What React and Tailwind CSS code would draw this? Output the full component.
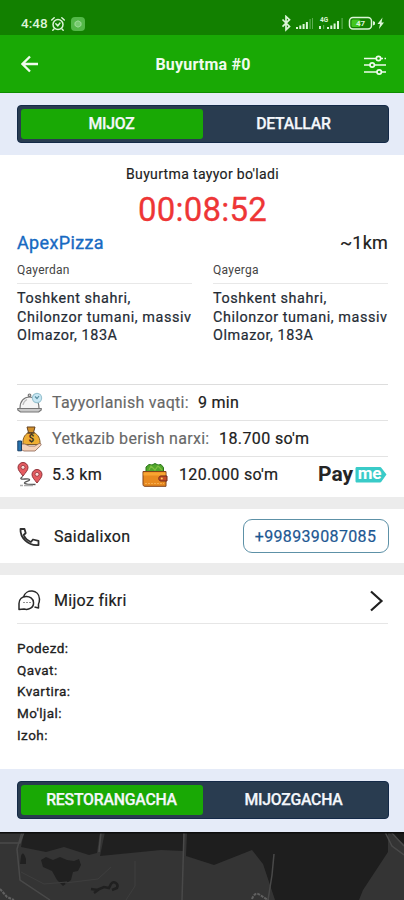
import React from "react";

function StatusBar() {
  return (
    <div className="flex h-[35px] items-start justify-between bg-[#128000] px-[21px] pt-[15px] text-[#dcf5d8]">
      <div className="flex h-[17px] items-center">
        <span className="w-[28px] whitespace-nowrap text-[13.5px] font-medium leading-[17px]">4:48</span>
        <svg className="ml-[1px]" width="16" height="16" viewBox="0 0 16 16" fill="none" stroke="currentColor" strokeWidth="1.5" strokeLinecap="round">
          <circle cx="8" cy="8.5" r="5" />
          <path d="M1.7 4 4.2 1.8M14.3 4 11.8 1.8M4 13l-1.2 1.2M12 13l1.2 1.2M5.8 7.8 7.8 9.8 10 7" />
        </svg>
        <svg className="ml-[5px]" width="14" height="14" viewBox="0 0 14 14">
          <rect width="14" height="14" rx="4" fill="#53b848" />
          <path d="M4 5.5 7 3.8l3 1.7v3L7 10.2 4 8.5z" fill="#77ca70" stroke="#9ddc98" />
        </svg>
      </div>
      <svg className="-mr-[3px]" width="105" height="17" viewBox="281 15 105 17">
        <path d="m282.500 19.500 7 7-3.500 3.200v-13.200l3.500 3.200-7 7" fill="none" stroke="currentColor" strokeWidth="1.700" />
        <path d="M296 29v-2h2v2zM299.300 29v-3.500h2V29zM302.600 29v-5h2v5zM305.900 29v-7h2v7z" fill="currentColor" />
        <path d="M309.500 19h1.200v10h-1.200zM312 18h1v11h-1z" fill="#5bae50" />
        <path d="M319 29v-3h2v3zM327 29v-2h2v2zM330.300 29v-3.500h2V29zM333.600 29v-5.500h2V29zM337 29v-8h2v8z" fill="currentColor" />
        <path d="M341.500 18h1.200v11h-1.200zM323 25h1.200v4H323z" fill="#5bae50" />
        <text x="320" y="21.800" fontSize="6.500" fontWeight="700" fill="currentColor">4G</text>
        <rect x="349.500" y="17.500" width="22" height="11.500" rx="3.500" fill="none" stroke="currentColor" strokeWidth="1.500" />
        <rect x="351.500" y="19.500" width="9" height="7.500" rx="1.500" fill="#43c51f" />
        <path d="M373 21v4.500l2-1v-2.500z" fill="currentColor" />
        <text x="360.500" y="26.300" textAnchor="middle" fontSize="8" fontWeight="700" fill="currentColor">47</text>
        <path d="m382.500 17.500-5 6.500h2.500l-1 5 5-6.500h-2.500z" fill="currentColor" />
      </svg>
    </div>
  );
}

function Header() {
  return (
    <div className="flex h-[58px] items-center justify-between border-b border-[#0d8d00] bg-[#19a905] pl-[21px] pr-[17px] text-[#effbed]">
      <svg width="22" height="18" viewBox="0 0 22 18" fill="none" stroke="currentColor" strokeWidth="2.300">
        <path d="M17 9H2M9 1.500 1.500 9 9 16.500" />
      </svg>
      <div className="pt-[2px] text-[16px] font-bold tracking-[0.2px]">Buyurtma #0</div>
      <svg className="mt-[2px]" width="24" height="22" viewBox="0 0 24 22" fill="none" stroke="currentColor" strokeWidth="1.700">
        <path d="M1 4.500h12M18 4.500h2M21.500 4.500h1.500M1 11h6M11.500 11H23M1 18h13M18.500 18H23" />
        <circle cx="15.500" cy="4.500" r="2.200" />
        <circle cx="9.200" cy="11" r="2.200" />
        <circle cx="16.200" cy="18" r="2.200" />
      </svg>
    </div>
  );
}

function Toggle({ left, right }) {
  return (
    <div className="flex h-[38px] items-stretch rounded-[4px] border border-[#142a48] bg-[#293c50] p-[3px] text-[15.800px] font-medium tracking-[-0.220px] text-[#f4f7fb] [-webkit-text-stroke:0.250px_#f4f7fb]">
      <div className="flex w-[182px] items-center justify-center rounded-[3px] bg-[#19a905] pr-[1px]">{left}</div>
      <div className="flex flex-1 items-center justify-center pr-[1px]">{right}</div>
    </div>
  );
}

function Address({ title }) {
  return (
    <div className="w-[175px]">
      <div className="border-b border-[#e8e8e8] pb-[4px] text-[12px] leading-[17px] tracking-[0.280px] text-[#444]">{title}</div>
      <div className="whitespace-nowrap pt-[6px] text-[14.400px] leading-[18.500px] tracking-[0.570px] text-[#242b34] [-webkit-text-stroke:0.200px_#242b34]">
        Toshkent shahri,<br />Chilonzor tumani, massiv<br />Olmazor, 183A
      </div>
    </div>
  );
}

function ClocheIcon() {
  return (
    <svg width="26" height="26" viewBox="0 0 26 26" fill="none" stroke="#777" strokeWidth="1.200">
      <path d="M3 18C3 11 7 7 12.500 7S22 11 22 18" fill="#f5f5f5" />
      <circle cx="12.500" cy="5.300" r="1.300" fill="#ddd" />
      <path d="M6 15c.5-3 2-4.500 4-5.500" stroke="#bbb" />
      <path d="M.8 18.500h23.400v1.500l-2.500 2H3.500L.8 20z" fill="#c9c9c9" />
      <circle cx="20" cy="8" r="4.600" fill="#c9e8f5" stroke="#9ac4d1" />
      <path d="M18 6.500 20 8.500 22 6" stroke="#588d9f" />
    </svg>
  );
}

function MoneyIcon() {
  return (
    <svg width="26" height="26" viewBox="0 0 26 26" strokeWidth="1">
      <path d="M10 1h8l-1.500 5.500h-5z" fill="#d3902a" stroke="#654321" />
      <path d="M11.500 6.500C7 9 5.500 13 6 18.500h17c.5-6-2-10-6-12z" fill="#efae34" stroke="#805a27" />
      <path d="M10.500 7h7" stroke="#59422a" strokeWidth="1.500" />
      <text x="14.500" y="16.300" textAnchor="middle" fontSize="10" fontWeight="700" fill="#3d3221">$</text>
      <path d="M4 18h4l4 2h6l4-2.500c1.500-.7 2.800.7 1.700 2L18 25H7l-3-1.500z" fill="#f5d3bc" stroke="#8a6350" strokeWidth=".8" />
      <path d="M.8 15h3.700v9.800H.8z" fill="#2673ae" stroke="#173c66" />
    </svg>
  );
}

function RouteIcon() {
  return (
    <svg width="26" height="26" viewBox="0 0 26 26" fill="none">
      <path d="M6 14.500c-4 2-2 3 2 2.500 5-.7 6 1 2.500 2.200-3 1-5 2 0 3l8 .3" stroke="#555" strokeWidth="1.300" />
      <path d="M6 14C3.500 10.500 1 8.500 1 5.500a5 5 0 0 1 10 0C11 8.500 8.500 10.500 6 14z" fill="#e45b60" stroke="#8e3037" />
      <circle cx="6" cy="5.300" r="2" fill="#f8dcd8" stroke="#8e3037" strokeWidth=".8" />
      <path d="M20 21c-2.500-3.500-5-5.500-5-8.500a5 5 0 0 1 10 0c0 3-2.500 5-5 8.500z" fill="#e45b60" stroke="#8e3037" />
      <circle cx="20" cy="12.300" r="2" fill="#f8dcd8" stroke="#8e3037" strokeWidth=".8" />
      <path d="M3 23.500h3m1 0h9" stroke="#aaa" strokeWidth="1.500" />
    </svg>
  );
}

function WalletIcon() {
  return (
    <svg width="26" height="26" viewBox="0 0 26 26">
      <path d="M4 10V5l3-2.500L10 3l3-1.500L16 3l3-.5 2.500 3V10z" fill="#51a62c" stroke="#287517" />
      <path d="m7 8 2-4 4 4 3-4 4 4" fill="none" stroke="#7fc040" strokeWidth="1.200" />
      <path d="M1 9.500h23v14.800H3c-1.500 0-2-.8-2-2z" fill="#e88a20" stroke="#80431b" />
      <path d="M1.500 10.500h22v3h-22z" fill="#f8a431" />
      <path d="M3 21.500h19" stroke="#f4ad50" strokeDasharray="2 1" />
      <path d="M25 14h-6c-3 0-3 5 0 5h6z" fill="#c44c26" stroke="#742b1b" />
      <circle cx="19.800" cy="16.500" r="1" fill="#ffd466" />
    </svg>
  );
}

function PaymeLogo() {
  return (
    <div className="flex items-center pb-[2px]">
      <span className="w-[37px] whitespace-nowrap text-[21px] font-bold leading-[25px] tracking-[0px] text-[#252525]">Pay</span>
      <svg className="mt-[1px] overflow-visible" width="33" height="26" viewBox="0 -4 33 26">
        <path d="M2 1h22.500c1 0 1.500.3 2 1l5 6.500-5 7c-.5.700-1 1-2 1H2c-1 0-1.500-.5-1.500-1.500v-12.500C.5 1.500 1 1 2 1z" fill="#39cbc8" />
        <text x="14.600" y="13.300" textAnchor="middle" fontSize="17" fontWeight="700" letterSpacing="0" fill="#fff">me</text>
      </svg>
    </div>
  );
}

function MapStrip() {
  return (
    <svg className="block" width="404" height="68" viewBox="0 832 404 68" fill="none">
      <path d="M0 832h404v68H0z" fill="#343434" />
      <path d="M24 832h76l-3 21-8 2-25-8-18 5-25-5zM105 832h78v19l-22-1-61 6z" fill="#202020" />
      <path d="M187 832h201v20l-25 38-4 10h-84l-12-36-11-14-38 15-28-9z" fill="#1e1e1e" />
      <path d="m389 832 15 12v-12z" fill="#1b1b1b" />
      <path d="M21 856q2-6 5 3v5h-6zM41 860l5-3 7 3 7-3 7 3 7 1 5-2 2 6-3 6-5 1-2 8-8 6-6-6-5-9-9-4z" fill="#202020" />
      <path d="m91 889 7 1-4 3M97 890l7-3 5 1 2-4c3-4 8 0 6 4l-5 2" stroke="#202020" strokeWidth="2.500" />
      <path d="M0 843h20l4-11M22 832l-5 17 3 31 30 20M101 832l-2 20M184 832l-2 68M385 832l7 14 12 9M391 832l13 14M274 854l-2 21-4 25" stroke="#494949" strokeWidth="1.500" />
      <path d="M21 872l23 12 23-2M65 883l33-4 13-12M135 861v25l-9 14" stroke="#3e3e3e" strokeWidth="1" />
      <path d="m0 889 7 8 7 3M252 899q3-8 8-4l8 5" stroke="#606060" strokeWidth="2" strokeDasharray="3 1" />
      <path d="M0 832.500h404" stroke="#0d0d0d" strokeWidth="2" />
    </svg>
  );
}

export default function App() {
  return (
    <div className="h-[900px] w-[404px] overflow-hidden bg-white text-[#202020]" style={{ fontFamily: "Roboto, sans-serif" }}>
      <StatusBar />
      <Header />
      <div className="h-[62px] bg-[#e5ebf8] pl-[17px] pr-[15px] pt-[12px]">
        <Toggle left="MIJOZ" right="DETALLAR" />
      </div>
      <div className="h-[342px] pl-[17px] pr-[16px]">
        <div className="pt-[10px] text-center text-[14px] leading-[18px] tracking-[0.350px] [-webkit-text-stroke:0.150px_#202020]">Buyurtma tayyor bo'ladi</div>
        <div className="mt-[8px] text-center text-[33px] leading-[38px] tracking-[0.200px] text-[#ee3636] [-webkit-text-stroke:0.300px_#ee3636]">00:08:52</div>
        <div className="mt-[2px] flex h-[22px] items-center justify-between text-[18px] tracking-[0.2px]">
          <span className="tracking-[0.350px] text-[#176ac2] [-webkit-text-stroke:0.350px_#176ac2]">ApexPizza</span>
          <span className="[-webkit-text-stroke:0.200px_#202020]">~1km</span>
        </div>
        <div className="mt-[9px] flex h-[122px] justify-between">
          <Address title="Qayerdan" />
          <Address title="Qayerga" />
        </div>
        <div className="flex h-[36px] items-center border-t border-[#ddd] text-[16px] tracking-[0.280px]">
          <ClocheIcon />
          <span className="ml-[9px] w-[146px] whitespace-nowrap text-[#686868] [-webkit-text-stroke:0.150px_#686868]">Tayyorlanish vaqti:</span>
          <span className="[-webkit-text-stroke:0.200px_#202020]">9 min</span>
        </div>
        <div className="flex h-[36px] items-center border-t border-[#e3e3e3] text-[16px] tracking-[0.300px]">
          <MoneyIcon />
          <span className="ml-[9px] w-[167px] whitespace-nowrap text-[#686868] [-webkit-text-stroke:0.150px_#686868]">Yetkazib berish narxi:</span>
          <span className="tracking-[0.400px] [-webkit-text-stroke:0.200px_#202020]">18.700 so'm</span>
        </div>
        <div className="flex h-[37px] items-center whitespace-nowrap border-t border-[#e3e3e3] text-[16px] tracking-[0.300px]">
          <RouteIcon />
          <span className="ml-[9px] w-[90px] [-webkit-text-stroke:0.200px_#202020]">5.3 km</span>
          <WalletIcon />
          <span className="ml-[11px] w-[139px] tracking-[0.350px] [-webkit-text-stroke:0.200px_#202020]">120.000 so'm</span>
          <PaymeLogo />
        </div>
      </div>
      <div className="h-[12px] bg-[#ececec]" />
      <div className="flex h-[54px] items-center pl-[17px] pr-[15px] text-[16px] tracking-[0.300px]">
        <svg className="ml-[2px] mt-[1px]" width="21" height="20" viewBox="0 0 21 20" fill="none" stroke="#303030" strokeWidth="1.800" strokeLinejoin="round">
          <path d="M1.500 2h4l1.200 4-2 2c1.500 3.300 4 5.600 7.200 7l2.100-2.500 5.500 1.400V18C9 19 1 10.500 1.500 2z" />
        </svg>
        <span className="ml-[14px] flex-1 pt-[2px] [-webkit-text-stroke:0.200px_#202020]">Saidalixon</span>
        <span className="flex h-[34px] w-[146px] items-center justify-center rounded-[9px] border border-[#5d91a7] pr-[1px] pt-[1px] tracking-[0.350px] text-[#1d5792] [-webkit-text-stroke:0.200px_#1d5792]">+998939087085</span>
      </div>
      <div className="h-[12px] bg-[#ececec]" />
      <div className="h-[194px] pl-[17px] pr-[16px]">
        <div className="flex h-[49px] items-center border-b border-[#e6e6e6] pt-[3px] text-[16px] tracking-[0.300px]">
          <svg className="ml-[1px]" width="23" height="23" viewBox="0 0 23 23" fill="none" stroke="#292929" strokeWidth="1.500" strokeLinejoin="round">
            <path d="M5.500 8C8-.5 21 0 21.500 10c0 2-.5 4-1 5v4l-4-1" />
            <path d="M1 20.500v-6C1 5.500 15 5 15.500 13.500c.5 5-5 8-9.500 6.500z" />
            <path d="M5.500 13.500h1m2 0h1m2 0h1" strokeWidth="1" />
          </svg>
          <span className="ml-[13px] flex-1 [-webkit-text-stroke:0.200px_#202020]">Mijoz fikri</span>
          <svg className="mr-[4px]" width="15" height="22" viewBox="0 0 15 22" fill="none" stroke="#202020" strokeWidth="2.200">
            <path d="m2 1.500 10.500 9.500L2 20.500" />
          </svg>
        </div>
        <div className="pt-[14px] text-[13.500px] leading-[21.700px] tracking-[0.450px] [-webkit-text-stroke:0.300px_#202020]">
          <div>Podezd:</div>
          <div>Qavat:</div>
          <div>Kvartira:</div>
          <div>Mo'ljal:</div>
          <div>Izoh:</div>
        </div>
      </div>
      <div className="h-[63px] bg-[#e5ebf8] pl-[17px] pr-[15px] pt-[12px]">
        <Toggle left="RESTORANGACHA" right="MIJOZGACHA" />
      </div>
      <MapStrip />
    </div>
  );
}
